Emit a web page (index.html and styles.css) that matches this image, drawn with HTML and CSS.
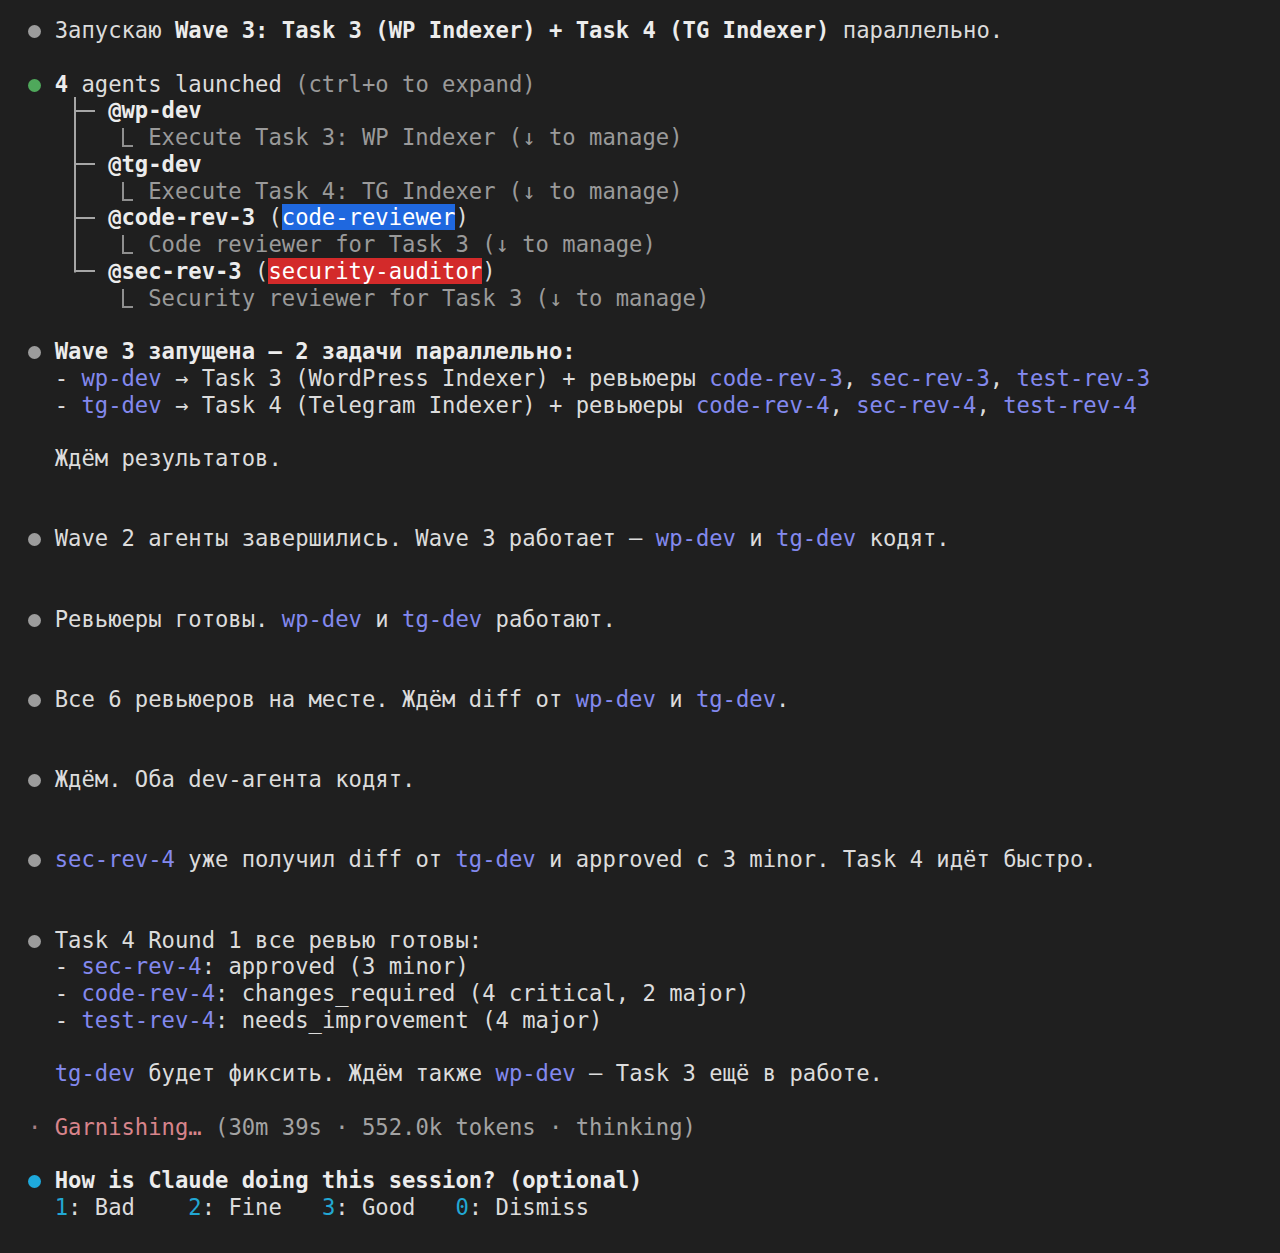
FILE: index.html
```html
<!DOCTYPE html>
<html lang="ru">
<head>
<meta charset="utf-8">
<title>Terminal</title>
<link rel="stylesheet" href="styles.css">
</head>
<body>
<main class="term">
<div class="ln"><span class="dot gray"></span> Запускаю <b>Wave 3: Task 3 (WP Indexer) + Task 4 (TG Indexer)</b> параллельно.</div>
<div class="ln"></div>
<div class="ln"><span class="dot green"></span> <b>4</b> agents launched <span class="dim">(ctrl+o to expand)</span></div>
<div class="ln">   <span class="c tee"></span><span class="c hz"></span> <b>@wp-dev</b></div>
<div class="ln">   <span class="c vl"></span>   <span class="elbow"></span> <span class="dim">Execute Task 3: WP Indexer (↓ to manage)</span></div>
<div class="ln">   <span class="c tee"></span><span class="c hz"></span> <b>@tg-dev</b></div>
<div class="ln">   <span class="c vl"></span>   <span class="elbow"></span> <span class="dim">Execute Task 4: TG Indexer (↓ to manage)</span></div>
<div class="ln">   <span class="c tee"></span><span class="c hz"></span> <b>@code-rev-3</b> (<span class="hl-blue">code-reviewer</span>)</div>
<div class="ln">   <span class="c vl"></span>   <span class="elbow"></span> <span class="dim">Code reviewer for Task 3 (↓ to manage)</span></div>
<div class="ln">   <span class="c corner"></span><span class="c hz"></span> <b>@sec-rev-3</b> (<span class="hl-red">security-auditor</span>)</div>
<div class="ln">       <span class="elbow"></span> <span class="dim">Security reviewer for Task 3 (↓ to manage)</span></div>
<div class="ln"></div>
<div class="ln"><span class="dot gray"></span> <b>Wave 3 запущена — 2 задачи параллельно:</b></div>
<div class="ln">  - <span class="ag">wp-dev</span> → Task 3 (WordPress Indexer) + ревьюеры <span class="ag">code-rev-3</span>, <span class="ag">sec-rev-3</span>, <span class="ag">test-rev-3</span></div>
<div class="ln">  - <span class="ag">tg-dev</span> → Task 4 (Telegram Indexer) + ревьюеры <span class="ag">code-rev-4</span>, <span class="ag">sec-rev-4</span>, <span class="ag">test-rev-4</span></div>
<div class="ln"></div>
<div class="ln">  Ждём результатов.</div>
<div class="ln"></div>
<div class="ln"></div>
<div class="ln"><span class="dot gray"></span> Wave 2 агенты завершились. Wave 3 работает — <span class="ag">wp-dev</span> и <span class="ag">tg-dev</span> кодят.</div>
<div class="ln"></div>
<div class="ln"></div>
<div class="ln"><span class="dot gray"></span> Ревьюеры готовы. <span class="ag">wp-dev</span> и <span class="ag">tg-dev</span> работают.</div>
<div class="ln"></div>
<div class="ln"></div>
<div class="ln"><span class="dot gray"></span> Все 6 ревьюеров на месте. Ждём diff от <span class="ag">wp-dev</span> и <span class="ag">tg-dev</span>.</div>
<div class="ln"></div>
<div class="ln"></div>
<div class="ln"><span class="dot gray"></span> Ждём. Оба dev-агента кодят.</div>
<div class="ln"></div>
<div class="ln"></div>
<div class="ln"><span class="dot gray"></span> <span class="ag">sec-rev-4</span> уже получил diff от <span class="ag">tg-dev</span> и approved с 3 minor. Task 4 идёт быстро.</div>
<div class="ln"></div>
<div class="ln"></div>
<div class="ln"><span class="dot gray"></span> Task 4 Round 1 все ревью готовы:</div>
<div class="ln">  - <span class="ag">sec-rev-4</span>: approved (3 minor)</div>
<div class="ln">  - <span class="ag">code-rev-4</span>: changes_required (4 critical, 2 major)</div>
<div class="ln">  - <span class="ag">test-rev-4</span>: needs_improvement (4 major)</div>
<div class="ln"></div>
<div class="ln">  <span class="ag">tg-dev</span> будет фиксить. Ждём также <span class="ag">wp-dev</span> — Task 3 ещё в работе.</div>
<div class="ln"></div>
<div class="ln"><span class="spin">·</span> <span class="pink">Garnishing…</span> <span class="dim2">(30m 39s · 552.0k tokens · thinking)</span></div>
<div class="ln"></div>
<div class="ln"><span class="dot cyan"></span> <b>How is Claude doing this session? (optional)</b></div>
<div class="ln">  <span class="num">1</span>: Bad    <span class="num">2</span>: Fine   <span class="num">3</span>: Good   <span class="num">0</span>: Dismiss</div>
</main>
</body>
</html>
```
FILE: styles.css
```css
html, body {
  margin: 0;
  padding: 0;
  background: #1f1f1f;
}

.term {
  font-family: "DejaVu Sans Mono", "Liberation Mono", monospace;
  font-size: 22.2px;
  line-height: 26.75px;
  color: #dcdcdc;
  padding: 17px 0 0 28px;
  min-height: 1236px;
}

.ln {
  white-space: pre;
  height: 26.75px;
}

b {
  font-weight: bold;
  color: #ececec;
}

.dim {
  color: #9a9a9a;
}

.dim2 {
  color: #a3a3a3;
}

.ag {
  color: #8389ee;
}

.pink {
  color: #d8848b;
}

.spin {
  color: #a87f84;
}

.num {
  color: #22a7d3;
}

.hl-blue {
  background: #1f68df;
  color: #ffffff;
}

.hl-red {
  background: #d32a2a;
  color: #ffffff;
}

/* bullets */
.dot {
  display: inline-flex;
  width: 1ch;
  height: 14px;
  justify-content: center;
  align-items: center;
  vertical-align: 0px;
}

.dot::before {
  content: "";
  flex: none;
  width: 13px;
  height: 13px;
  border-radius: 50%;
  background: currentColor;
}

.dot.gray { color: #9c9c9c; }
.dot.green { color: #4fa85b; }
.dot.cyan { color: #1ea9dc; }

/* tree cells: one character wide, one line tall */
.c {
  display: inline-block;
  width: 1ch;
  height: 26.75px;
  vertical-align: top;
  background-repeat: no-repeat;
}

.vl {
  background-image: linear-gradient(#a6a6a6, #a6a6a6);
  background-position: 50% 0;
  background-size: 2px 100%;
}

.tee {
  background-image: linear-gradient(#a6a6a6, #a6a6a6), linear-gradient(#a6a6a6, #a6a6a6);
  background-position: 50% 0, 100% 50%;
  background-size: 2px 100%, 50% 2px;
}

.corner {
  background-image: linear-gradient(#a6a6a6, #a6a6a6), linear-gradient(#a6a6a6, #a6a6a6);
  background-position: 50% 0, 100% 50%;
  background-size: 2px calc(50% + 1px), 50% 2px;
}

.hz {
  background-image: linear-gradient(#a6a6a6, #a6a6a6);
  background-position: 0 50%;
  background-size: 100% 2px;
}

.elbow {
  display: inline-block;
  box-sizing: border-box;
  width: 11px;
  height: 19px;
  margin-right: calc(1ch - 11px);
  border-left: 2px solid #8f8f8f;
  border-bottom: 2px solid #8f8f8f;
  vertical-align: -2px;
}
```
